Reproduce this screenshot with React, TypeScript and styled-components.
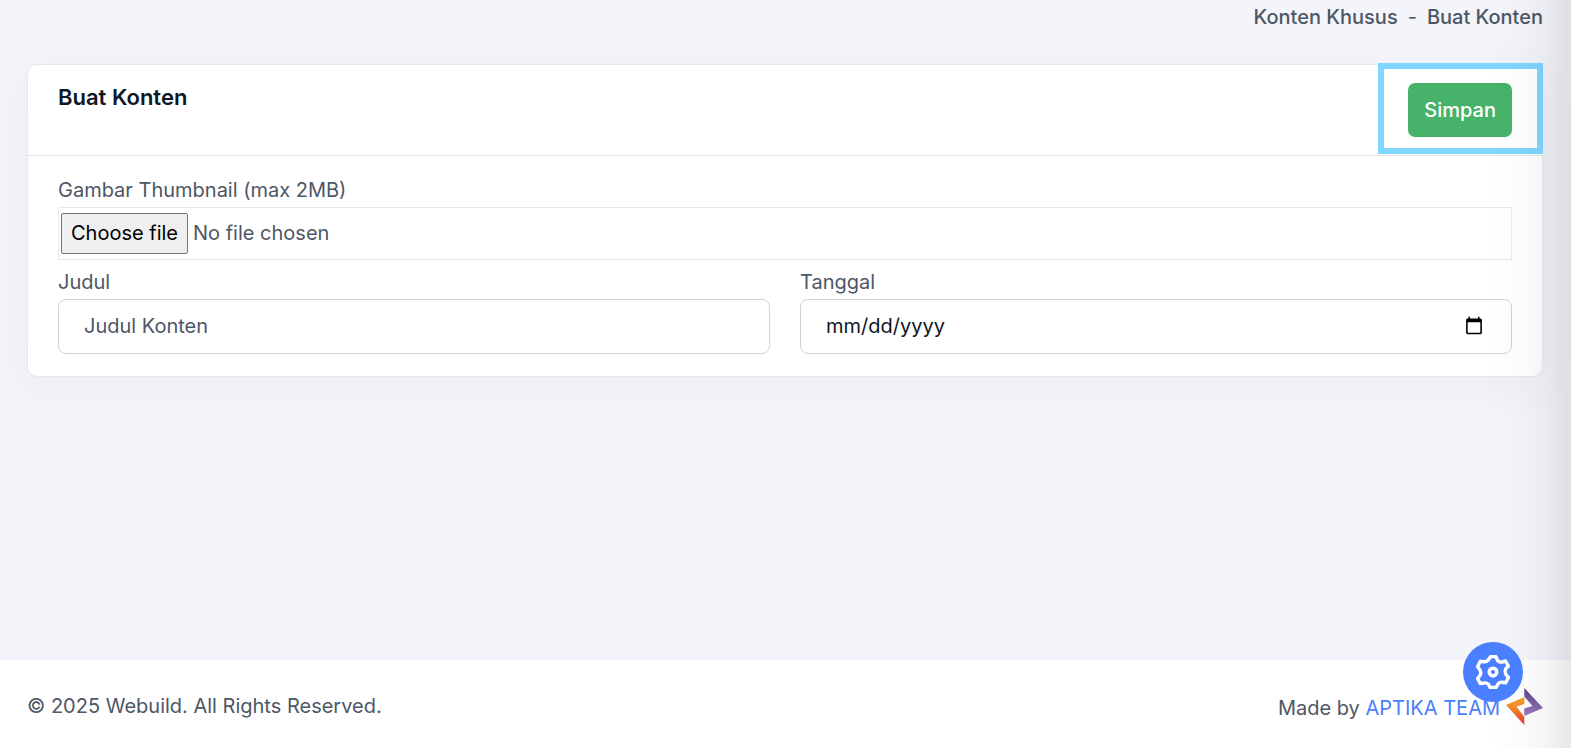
import React from "react";
import styled, { createGlobalStyle } from "styled-components";

const GlobalStyle = createGlobalStyle`
  *, *::before, *::after { box-sizing: border-box; }
  body {
    margin: 0;
    background: #f4f5fa;
    color: #4d5765;
    font-family: Inter, "Liberation Sans", sans-serif;
    font-size: 20px;
    line-height: 30px;
  }
  button, input { font: inherit; }
`;

const Page = styled.div`
  position: relative;
  display: flex;
  flex-direction: column;
  min-height: 100vh;
`;

const EdgeShade = styled.div`
  position: absolute;
  inset: 0 0 0 auto;
  width: 84px;
  pointer-events: none;
  background: linear-gradient(to right, rgba(0, 0, 0, 0), rgba(0, 0, 0, 0.01) 40%, rgba(0, 0, 0, 0.04) 70%, rgba(0, 0, 0, 0.09));
`;

const Main = styled.main`
  flex: 1;
  padding: 2px 28px 0 27px;
`;

const Breadcrumb = styled.nav`
  display: flex;
  justify-content: flex-end;
  gap: 10px;
  margin-bottom: 32px;
`;

const Crumb = styled.a`
  color: inherit;
  font-weight: 500;
  text-decoration: none;
`;

const Card = styled.section`
  background: #fff;
  border: 1px solid #e6e7eb;
  border-radius: 10px;
  box-shadow: 0 10px 40px rgba(68, 72, 120, 0.05);
`;

const CardHeader = styled.header`
  display: flex;
  justify-content: space-between;
  align-items: flex-start;
  padding-left: 30px;
  border-bottom: 1px solid #e6e7eb;
`;

const Title = styled.h1`
  margin: 0;
  padding-top: 18px;
  color: #0e1726;
  font-size: 22px;
  font-weight: 600;
  line-height: 28px;
`;

const ActionFrame = styled.div`
  margin: -2px -1px 1px 0;
  padding: 14px 25px 11px 24px;
  border: 6px solid #80d7ff;
`;

const SaveButton = styled.button`
  display: block;
  height: 54px;
  padding: 0 16px;
  border: 0;
  border-radius: 7px;
  background: #47b36a;
  color: #fff;
  font-weight: 500;
  cursor: pointer;
`;

const Form = styled.form`
  padding: 18px 30px 22px;
`;

const Label = styled.label`
  display: block;
  padding-bottom: 1px;
  line-height: 32px;
`;

const FilePicker = styled.div`
  position: relative;
  display: flex;
  align-items: center;
  gap: 5px;
  height: 53px;
  margin-bottom: 6px;
  padding: 0 2px;
  border: 1px solid #e8e9eb;
`;

const FileInput = styled.input`
  position: absolute;
  inset: 0;
  width: 100%;
  opacity: 0;
  cursor: pointer;
`;

const FileButton = styled.span`
  padding: 4px 9px 5px;
  border: 1px solid #767676;
  border-radius: 2px;
  background: #efefef;
  color: #000;
`;

const FileStatus = styled.span`
  padding: 5px 0 6px;
`;

const Columns = styled.div`
  display: grid;
  grid-template-columns: 1fr 1fr;
  gap: 30px;
`;

const TextInput = styled.input`
  display: block;
  width: 100%;
  height: 55px;
  padding: 0 25px 2px;
  border: 1px solid #d0d3d9;
  border-radius: 8px;
  background: #fff;
  color: #0e1726;
  &::placeholder { color: #4d5765; opacity: 1; }
  &::-webkit-datetime-edit-month-field,
  &::-webkit-datetime-edit-day-field,
  &::-webkit-datetime-edit-year-field { padding: 0; }
`;

const Footer = styled.footer`
  display: flex;
  justify-content: space-between;
  align-items: center;
  height: 88px;
  padding: 4px 28px 0 27px;
  background: #fff;
`;

const Credit = styled.p`
  display: flex;
  align-items: center;
  gap: 6px;
  margin: 0;
`;

const CreditText = styled.span`
  padding-top: 4px;
`;

const TeamLink = styled.a`
  color: #4a80fd;
  text-decoration: none;
`;

const SettingsButton = styled.button`
  position: absolute;
  right: 48px;
  bottom: 46px;
  display: grid;
  place-items: center;
  width: 60px;
  height: 60px;
  padding: 0;
  border: 0;
  border-radius: 50%;
  background: #4a80ff;
  color: #fff;
  cursor: pointer;
`;

const CogIcon = () => (
  <svg width="36" height="36" viewBox="0 0 36 36" fill="none" stroke="currentColor" strokeWidth="3.4" strokeLinejoin="round" aria-hidden="true">
    <path d="M15.500 2.600H21L22.500 6.500Q24.500 8.600 27 8L30.500 7L33.300 12L30.600 15Q29.500 17.500 30.600 20L33.400 23.500L30.800 28.800L27 28.300Q24.500 28.200 23 30L21 33.400H15L13.500 30.500Q11.500 28.500 9 29L5.200 29.500L2.600 24.500L5 21.500Q6.500 19 5 16L2.600 12.500L5.400 7.200L9 7.800Q11.500 8 13.300 6Z" />
    <circle cx="18" cy="18" r="3.800" />
  </svg>
);

const TeamLogo = () => (
  <svg width="37" height="37" viewBox="0 0 37 37" aria-hidden="true">
    <defs>
      <linearGradient id="warm" x1="0" y1="0" x2="0" y2="1">
        <stop offset="0" stopColor="#f5a52a" />
        <stop offset="0.45" stopColor="#f0842b" />
        <stop offset="1" stopColor="#e3352f" />
      </linearGradient>
      <linearGradient id="violet" x1="0" y1="0" x2="0" y2="1">
        <stop offset="0" stopColor="#5e3f8c" />
        <stop offset="1" stopColor="#9a7cb8" />
      </linearGradient>
    </defs>
    <path d="M18.300 9 0 17 18.300 37V29L10.500 18.500 18.300 16z" fill="url(#warm)" />
    <path d="M18.300 0 37 20 18.300 28V20.500L26.500 18 18.300 8.500z" fill="url(#violet)" />
  </svg>
);

export default function App() {
  return (
    <Page>
      <GlobalStyle />
      <Main>
        <Breadcrumb aria-label="Breadcrumb">
          <Crumb href="#konten">Konten Khusus</Crumb>
          <span>-</span>
          <Crumb href="#buat">Buat Konten</Crumb>
        </Breadcrumb>
        <Card>
          <CardHeader>
            <Title>Buat Konten</Title>
            <ActionFrame>
              <SaveButton type="submit" form="content-form">Simpan</SaveButton>
            </ActionFrame>
          </CardHeader>
          <Form id="content-form">
            <Label htmlFor="thumbnail">Gambar Thumbnail (max 2MB)</Label>
            <FilePicker>
              <FileButton aria-hidden="true">Choose file</FileButton>
              <FileStatus aria-hidden="true">No file chosen</FileStatus>
              <FileInput id="thumbnail" type="file" accept="image/*" />
            </FilePicker>
            <Columns>
              <div>
                <Label htmlFor="judul">Judul</Label>
                <TextInput id="judul" type="text" placeholder="Judul Konten" />
              </div>
              <div>
                <Label htmlFor="tanggal">Tanggal</Label>
                <TextInput id="tanggal" type="date" />
              </div>
            </Columns>
          </Form>
        </Card>
      </Main>
      <Footer>
        <span>© 2025 Webuild. All Rights Reserved.</span>
        <Credit>
          <CreditText>Made by <TeamLink href="#team">APTIKA TEAM</TeamLink></CreditText>
          <TeamLogo />
        </Credit>
      </Footer>
      <EdgeShade />
      <SettingsButton type="button" aria-label="Settings">
        <CogIcon />
      </SettingsButton>
    </Page>
  );
}
